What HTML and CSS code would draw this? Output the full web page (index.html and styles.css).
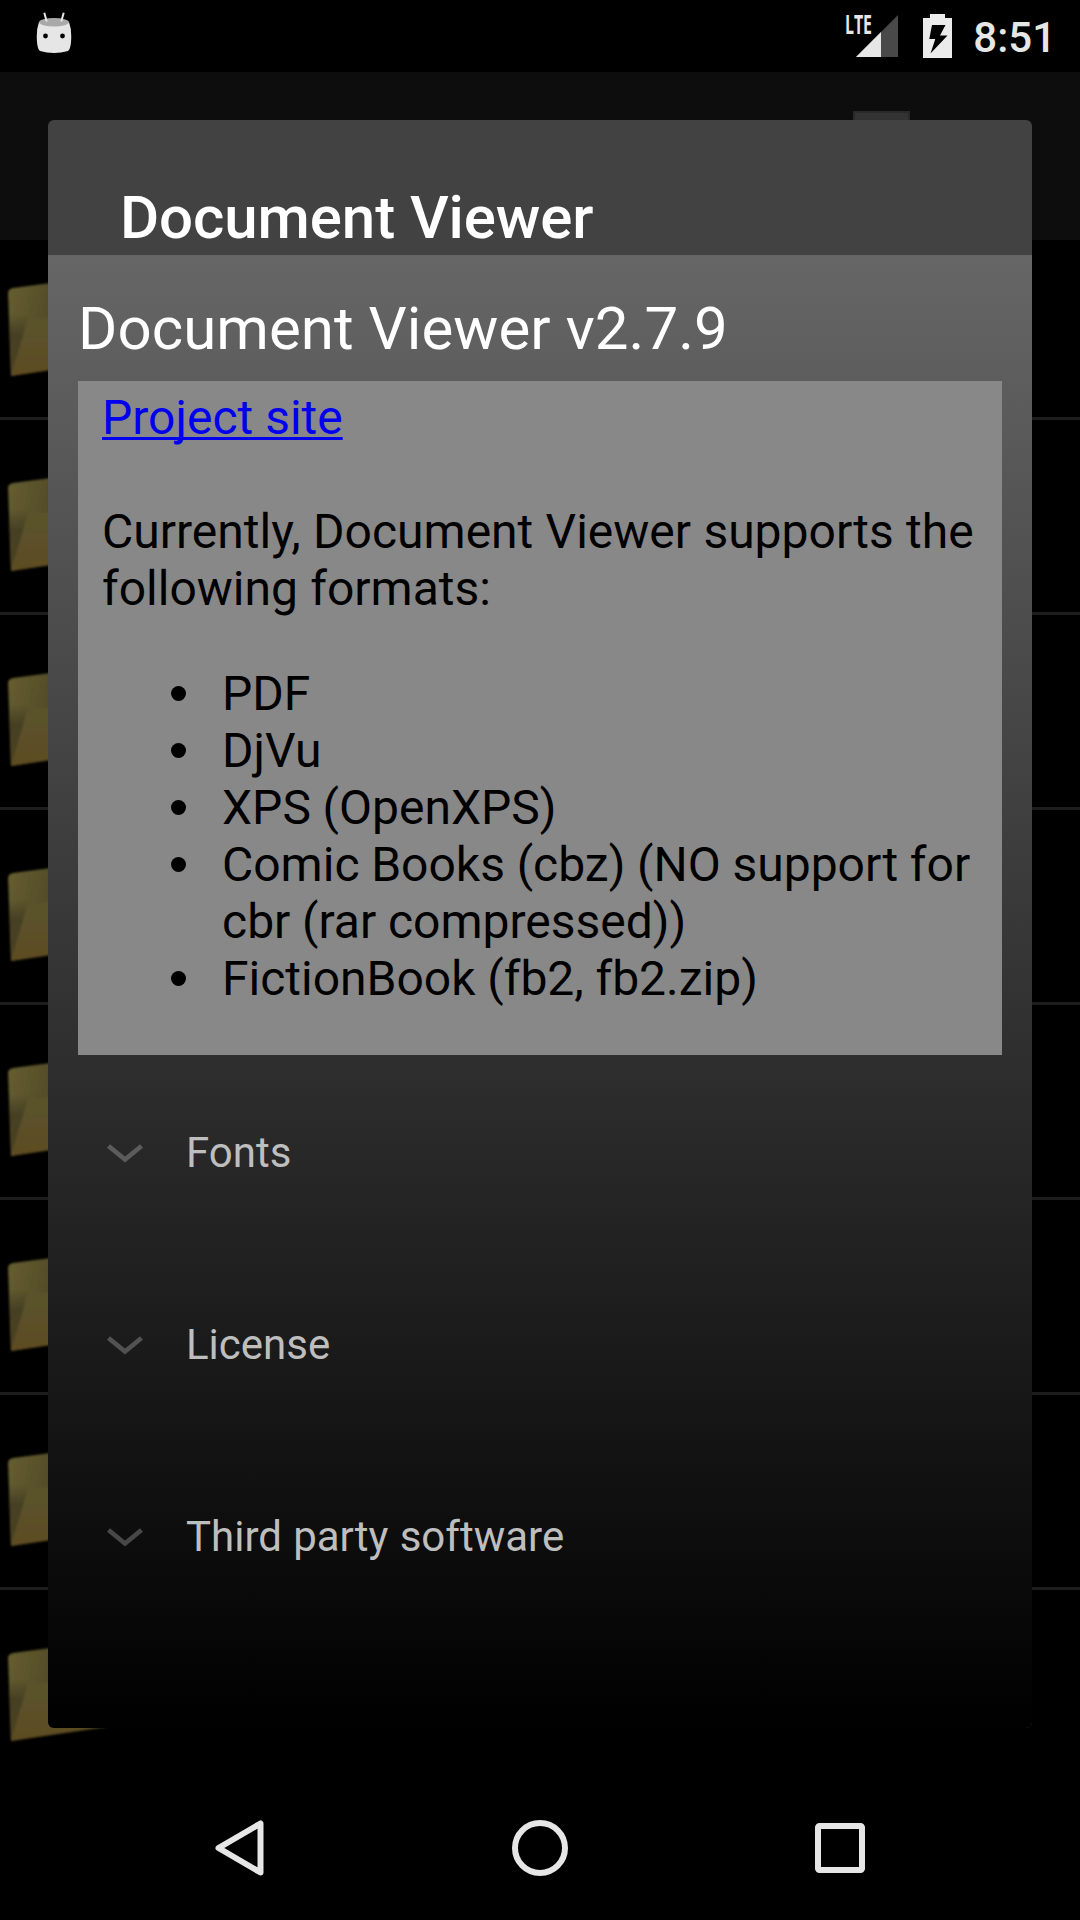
FILE: index.html
```html
<!DOCTYPE html>
<html lang="en">
<head>
<meta charset="utf-8">
<title>Document Viewer</title>
<link rel="stylesheet" href="styles.css">
</head>
<body>
<svg class="defs" width="0" height="0" aria-hidden="true">
  <defs>
    <linearGradient id="back" gradientUnits="userSpaceOnUse" x1="8" y1="20" x2="60" y2="30"><stop offset="0" stop-color="#645d30"/><stop offset="1" stop-color="#4f4826"/></linearGradient>
    <linearGradient id="wedge" gradientUnits="userSpaceOnUse" x1="0" y1="38" x2="0" y2="98"><stop offset="0" stop-color="#454024" stop-opacity="0"/><stop offset=".35" stop-color="#454024"/><stop offset="1" stop-color="#4c4124"/></linearGradient>
    <linearGradient id="front" gradientUnits="userSpaceOnUse" x1="0" y1="42" x2="0" y2="98"><stop offset="0" stop-color="#5a542d"/><stop offset=".5" stop-color="#5b5029"/><stop offset="1" stop-color="#5e4c22"/></linearGradient>
    <filter id="soft" x="-10%" y="-10%" width="120%" height="120%"><feGaussianBlur stdDeviation="1.1"/></filter>
    <symbol id="folder" viewBox="0 0 120 110">
      <g filter="url(#soft)">
        <path d="M8 17Q8 13 13 12L88 2V87L11 100Z" fill="url(#back)"/>
        <path d="M9 39H29L12 99Z" fill="url(#wedge)"/>
        <path d="M28 43L118 37L106 86L11 100Z" fill="url(#front)"/>
      </g>
    </symbol>
    <symbol id="chevron" viewBox="0 0 36 20"><path d="M1.500 2L18 15.500L34.500 2" fill="none" stroke="#fff" stroke-width="4.600"/></symbol>
  </defs>
</svg>
<div class="screen">
  <header class="status">
    <svg class="robot" width="36" height="42" viewBox="0 0 36 42">
      <path d="M3 10Q0 18 1 30Q1.500 37 4 39Q18 43 32 39Q34.500 37 35 30Q36 18 33 10Z" fill="#e6e6e6"/>
      <ellipse cx="18" cy="10.300" rx="15" ry="4.200" fill="#a9a9a9"/>
      <path d="M8.300 .800L10.700 9.500M27.700 .800L25.300 9.500" stroke="#e6e6e6" stroke-width="2"/>
      <circle cx="9.500" cy="24" r="2.400"/><circle cx="26.500" cy="24" r="2.400"/>
    </svg>
    <div class="indicators">
      <svg class="signal" width="54" height="44" viewBox="0 0 54 44">
        <path d="M53 0V42H11Z" fill="#494949"/><path d="M36 17V42H11Z" fill="#e6e6e6"/>
        <text class="lte" x="0" y="19" textLength="27" lengthAdjust="spacingAndGlyphs">LTE</text>
      </svg>
      <svg class="battery" width="29" height="44" viewBox="0 0 29 44">
        <path d="M7 0H22V4H29V44H0V4H7Z" fill="#ebebeb"/>
        <path d="M9 11H22.500L17 21.500H24.500L7.500 39.500L12.300 25H6.300Z" fill="#000"/>
      </svg>
      <span class="clock">8:51</span>
    </div>
  </header>
  <div class="toolbar"><div class="tool"></div></div>
  <main class="list">
    <div class="row first"><svg class="folder"><use href="#folder"/></svg></div>
    <div class="row"><svg class="folder"><use href="#folder"/></svg></div>
    <div class="row"><svg class="folder"><use href="#folder"/></svg></div>
    <div class="row"><svg class="folder"><use href="#folder"/></svg></div>
    <div class="row"><svg class="folder"><use href="#folder"/></svg></div>
    <div class="row"><svg class="folder"><use href="#folder"/></svg></div>
    <div class="row"><svg class="folder"><use href="#folder"/></svg></div>
    <div class="row last"><svg class="folder"><use href="#folder"/></svg></div>
  </main>
  <nav class="nav">
    <svg width="84" height="84" viewBox="0 0 84 84"><path d="M62.500 17.500V66.500L20.500 42Z"/></svg>
    <svg width="84" height="84" viewBox="0 0 84 84"><circle cx="42" cy="42" r="25"/></svg>
    <svg width="84" height="84" viewBox="0 0 84 84"><rect x="20" y="20" width="44" height="44" rx="1.500"/></svg>
  </nav>
  <section class="dialog" role="dialog">
    <h1 class="title">Document Viewer</h1>
    <div class="content">
      <h2 class="version">Document Viewer v2.7.9</h2>
      <article class="about">
        <p><a class="link" href="#">Project site</a></p>
        <p class="intro">Currently, Document Viewer supports the following formats:</p>
        <ul class="formats">
          <li>PDF</li>
          <li>DjVu</li>
          <li>XPS (OpenXPS)</li>
          <li>Comic Books (cbz) (NO support for cbr (rar compressed))</li>
          <li>FictionBook (fb2, fb2.zip)</li>
        </ul>
      </article>
      <div class="group"><svg class="chevron"><use href="#chevron"/></svg>Fonts</div>
      <div class="group"><svg class="chevron"><use href="#chevron"/></svg>License</div>
      <div class="group"><svg class="chevron"><use href="#chevron"/></svg>Third party software</div>
    </div>
  </section>
</div>
</body>
</html>
```
FILE: styles.css
```css
* { box-sizing: border-box; margin: 0; padding: 0; }
body { background: #000; font-family: Roboto, sans-serif; overflow: hidden; }
.defs { position: absolute; }
.screen { position: relative; width: 1080px; height: 1920px; display: flex; flex-direction: column; background: #000; }

.status { height: 72px; flex: none; display: flex; justify-content: space-between; padding: 0 24px 0 36px; }
.robot { margin-top: 12px; }
.indicators { display: flex; align-items: flex-start; }
.signal { margin: 15px 24px 0 0; overflow: visible; }
.battery { margin: 14px 21px 0 0; }
.lte { font: 700 26px "Open Sans", sans-serif; fill: #e6e6e6; }
.clock { font-size: 42px; line-height: 49px; font-weight: 500; color: #e6e6e6; margin-top: 13px; }

.toolbar { height: 168px; flex: none; background: #0d0d0d; padding: 39px 170px 0 0; display: flex; justify-content: flex-end; }
.tool { width: 57px; height: 60px; background: #333; border: 2px solid #292929; }

.list { flex: 1; overflow: hidden; }
.row { height: 195px; border-bottom: 3px solid #1d1d1d; padding-top: 51px; }
.first { height: 180px; padding-top: 36px; }
.last { border: 0; }
.folder { display: block; width: 120px; height: 110px; }

.nav { height: 144px; flex: none; display: flex; justify-content: center; align-items: center; gap: 216px; }
.nav svg { fill: none; stroke: #e6e6e6; stroke-width: 6; stroke-linejoin: round; }

.dialog { position: absolute; left: 48px; top: 120px; width: 984px; height: 1608px; border-radius: 6px; overflow: hidden; background: #424242; display: flex; flex-direction: column; }
.title { height: 135px; flex: none; padding: 62px 72px 0; font-size: 60px; line-height: 71px; font-weight: 500; letter-spacing: -.08px; color: #fff; }
.content { flex: 1; padding: 0 30px; background: linear-gradient(#666, #000); }
.version { height: 126px; padding-top: 38px; font-size: 60px; line-height: 71px; font-weight: 400; letter-spacing: .05px; color: #fff; }
.about { height: 674px; background: #888; padding: 8px 24px 0; color: #000; font-size: 48px; line-height: 57px; }
.link { color: #00e; text-decoration: underline; text-decoration-thickness: 3px; text-underline-offset: 3px; text-decoration-skip-ink: none; }
.intro { margin-top: 57px; word-spacing: .4px; }
.formats { margin-top: 48px; padding-left: 120px; list-style: none; word-spacing: -.2px; }
.formats li::before { content: ""; display: inline-block; width: 15px; height: 15px; margin: 0 36px 0 -51px; border-radius: 50%; background: #000; vertical-align: 9px; }
.group { height: 192px; display: flex; align-items: center; gap: 43px; padding: 3px 0 0 29px; font-size: 42px; line-height: 49px; word-spacing: .8px; color: #bebebe; }
.chevron { width: 36px; height: 20px; margin-top: 3px; opacity: .24; }
```
